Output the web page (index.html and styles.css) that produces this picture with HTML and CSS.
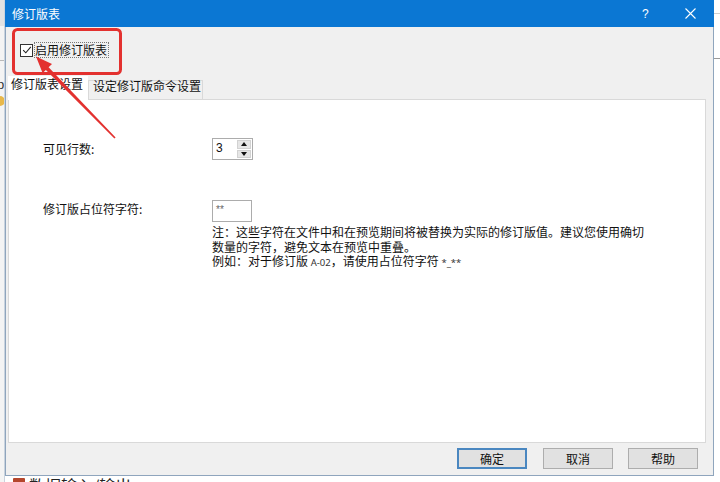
FILE: index.html
```html
<!DOCTYPE html>
<html lang="zh-CN">
<head>
<meta charset="utf-8">
<title>修订版表</title>
<link rel="stylesheet" href="styles.css">
</head>
<body>
<div class="page">
  <div class="bg-left">
    <span class="bg-p">p</span>
    <span class="bg-coin"></span>
  </div>
  <div class="dialog">
    <div class="titlebar">
      <span class="title">修订版表</span>
      <span class="help">?</span>
      <span class="close">
        <svg width="11" height="11" viewBox="0 0 11 11"><path d="M0.5 0.5L10.5 10.5M10.5 0.5L0.5 10.5" stroke="#fff" stroke-width="1.1" fill="none"/></svg>
      </span>
    </div>
    <div class="body">
      <label class="check-row">
        <span class="checkbox">
          <svg width="10" height="10" viewBox="0 0 10 10"><path d="M1.2 5.2L3.8 7.8L8.8 1.8" stroke="#222" stroke-width="1.1" fill="none"/></svg>
        </span>
        <span class="check-label">启用修订版表</span>
      </label>
      <div class="tabs">
        <div class="tab active">修订版表设置</div>
        <div class="tab">设定修订版命令设置</div>
      </div>
      <div class="panel">
        <div class="form-row row-lines">
          <div class="label">可见行数:</div>
          <div class="spinner">
            <span class="spin-value">3</span>
            <span class="spin-btns">
              <span class="spin-btn"><span class="tri-up"></span></span>
              <span class="spin-btn"><span class="tri-down"></span></span>
            </span>
          </div>
        </div>
        <div class="form-row row-placeholder">
          <div class="label label-top">修订版占位符字符:</div>
          <div class="field">
            <div class="textbox">**</div>
            <p class="note"><span class="line">注：这些字符在文件中和在预览期间将被替换为实际的修订版值。建议您使用确切</span><span class="line">数量的字符，避免文本在预览中重叠。</span><span class="line">例如：对于修订版 <span class="small">A-02</span>，请使用占位符字符 <span class="small">*_**</span></span></p>
          </div>
        </div>
      </div>
      <div class="buttons">
        <button class="btn default">确定</button>
        <button class="btn">取消</button>
        <button class="btn">帮助</button>
      </div>
    </div>
  </div>
  <div class="bg-right"></div>
  <div class="bg-bottom">
    <span class="bg-icon"></span>
    <span class="bg-text">数据输入/输出</span>
  </div>
  <svg class="annot" width="720" height="482" viewBox="0 0 720 482">
    <rect x="13.5" y="29.5" width="107" height="44" rx="4" ry="4" fill="none" stroke="#e3312f" stroke-width="3"/>
    <polygon fill="#e3312f" points="36,56.5 52,64 48.6,67.3 115.6,137.5 114.4,138.6 45.9,69.9 42.6,73"/>
  </svg>
</div>
</body>
</html>
```

FILE: styles.css
```css
* { box-sizing: border-box; }
html, body { margin: 0; padding: 0; }
body {
  width: 720px;
  height: 482px;
  overflow: hidden;
  background: #ffffff;
  font-family: "Noto Sans CJK SC", "Noto Sans", sans-serif;
  font-size: 12px;
  color: #111;
}
.page {
  position: relative;
  width: 720px;
  height: 482px;
  display: grid;
  grid-template-columns: 5px 709px 6px;
  grid-template-rows: 476px 6px;
}
.bg-left {
  grid-column: 1;
  grid-row: 1 / span 2;
  background: #f4f4f4;
  border-right: 1px solid #c9d3de;
  display: flex;
  flex-direction: column;
  align-items: flex-start;
  padding-top: 78px;
  overflow: hidden;
  background-image: linear-gradient(#e2e2e2, #e2e2e2), linear-gradient(#b9b9b9, #b9b9b9);
  background-size: 100% 26px, 100% 1px;
  background-position: 0 0, 0 60px;
  background-repeat: no-repeat;
}
.bg-p {
  font-family: "Liberation Sans", sans-serif;
  font-size: 13px;
  line-height: 14px;
  margin-left: -3px;
  color: #333;
}
.bg-coin {
  width: 10px;
  height: 10px;
  margin-left: -5px;
  margin-top: 4px;
  border-radius: 50%;
  background: #e8b84a;
}
.dialog {
  grid-column: 2;
  grid-row: 1;
  display: flex;
  flex-direction: column;
  border: 1px solid #8fa5bd;
  border-top: none;
  background: #f0f0f0;
}
.titlebar {
  height: 27px;
  flex: none;
  background: #0b77d3;
  color: #fff;
  display: flex;
  align-items: center;
  padding-left: 6px;
  margin: 0 -1px;
}
.title { flex: 1; font-size: 12px; line-height: 14px; padding-left: 1px; }
.help {
  font-family: "Liberation Sans", sans-serif;
  font-size: 12px;
  width: 12px;
  margin-right: 31px;
}
.close { display: flex; margin-right: 18px; }
.body {
  flex: 1;
  display: flex;
  flex-direction: column;
}
.check-row {
  display: flex;
  align-items: center;
  height: 14px;
  margin-top: 16px;
  padding-left: 14px;
}
.checkbox {
  width: 13px;
  height: 13px;
  border: 1px solid #333;
  background: #fff;
  display: flex;
  align-items: center;
  justify-content: center;
}
.check-label {
  margin-left: 1px;
  line-height: 14px;
  border: 1px dotted #777;
  padding: 0 1px 0 0;
}
.tabs {
  display: flex;
  align-items: flex-end;
  margin-top: 19px;
  margin-left: 2px;
  height: 23px;
  position: relative;
  z-index: 1;
}
.tab {
  height: 19px;
  line-height: 10px;
  padding-top: 0;
  padding-left: 4px;
  width: 115px;
  background: #f0f0f0;
  border: 1px solid #d9d9d9;
  border-bottom: none;
  white-space: nowrap;
}
.tab.active {
  width: 80px;
  height: 24px;
  line-height: 14px;
  padding-left: 2px;
  background: #fff;
  border-color: #fff;
  margin-bottom: -1px;
}
.panel {
  height: 344px;
  margin: 0 7px 0 2px;
  background: #fff;
  border: 1px solid #d9d9d9;
  padding: 38px 0 0 34px;
  display: flex;
  flex-direction: column;
}
.form-row {
  display: grid;
  grid-template-columns: 169px 1fr;
}
.label { align-self: center; line-height: 16px; }
.label-top { align-self: start; padding-top: 1px; }
.row-placeholder { margin-top: 40px; }
.spinner {
  width: 41px;
  height: 22px;
  border: 1px solid #acacac;
  display: flex;
  background: #fff;
}
.spin-value {
  flex: 1;
  padding-left: 3px;
  line-height: 19px;
  font-family: "Liberation Sans", sans-serif;
  font-size: 12px;
}
.spin-btns {
  width: 15px;
  display: flex;
  flex-direction: column;
  padding: 1px 1px 1px 0;
  gap: 1px;
}
.spin-btn {
  flex: 1;
  background: #e6e6e6;
  border: 1px solid #d2d2d2;
  display: flex;
  align-items: center;
  justify-content: center;
}
.tri-up {
  width: 0; height: 0;
  border-left: 3px solid transparent;
  border-right: 3px solid transparent;
  border-bottom: 4px solid #111;
}
.tri-down {
  width: 0; height: 0;
  border-left: 3px solid transparent;
  border-right: 3px solid transparent;
  border-top: 4px solid #111;
}
.field { display: flex; flex-direction: column; }
.textbox {
  width: 40px;
  height: 22px;
  border: 1px solid #acacac;
  background: #fff;
  font-family: "Liberation Sans", sans-serif;
  font-size: 10px;
  line-height: 12px;
  padding: 3px 0 0 3px;
  color: #666;
}
.note {
  margin: 3px 0 0 0;
  font-size: 12px;
  white-space: nowrap;
  display: flex;
  flex-direction: column;
}
.note .line {
  display: block;
  height: 14.5px;
  line-height: 14.5px;
}
.small {
  font-family: "Noto Sans", sans-serif;
  font-size: 9.5px;
  color: #333;
}
.buttons {
  display: flex;
  justify-content: flex-end;
  gap: 15px;
  padding-right: 15px;
  margin-top: 5px;
}
.btn {
  width: 70px;
  height: 21px;
  font-family: "Noto Sans CJK SC", sans-serif;
  font-size: 12px;
  line-height: 16px;
  color: #111;
  background: #e1e1e1;
  border: 1px solid #adadad;
  padding: 0;
  margin: 0;
}
.btn.default {
  border: 2px solid #4a87c0;
  margin-right: 1px;
}
.bg-right {
  grid-column: 3;
  grid-row: 1 / span 2;
  background: #fff;
  background-image: linear-gradient(#d0d0d0, #d0d0d0), linear-gradient(#9a9a9a, #9a9a9a);
  background-size: 100% 1px, 100% 1px;
  background-position: 0 13px, 0 58px;
  background-repeat: no-repeat;
}
.bg-bottom {
  grid-column: 2;
  grid-row: 2;
  display: flex;
  align-items: flex-start;
  overflow: hidden;
  background: #fff;
  padding-left: 8px;
}
.bg-icon {
  width: 12px;
  height: 12px;
  margin-top: 2px;
  background: #b5462c;
  border-radius: 1px;
}
.bg-text {
  margin-left: 4px;
  font-size: 16px;
  line-height: 16px;
  margin-top: 1px;
  color: #222;
}
.annot {
  position: absolute;
  left: 0;
  top: 0;
  pointer-events: none;
  z-index: 5;
}
```
